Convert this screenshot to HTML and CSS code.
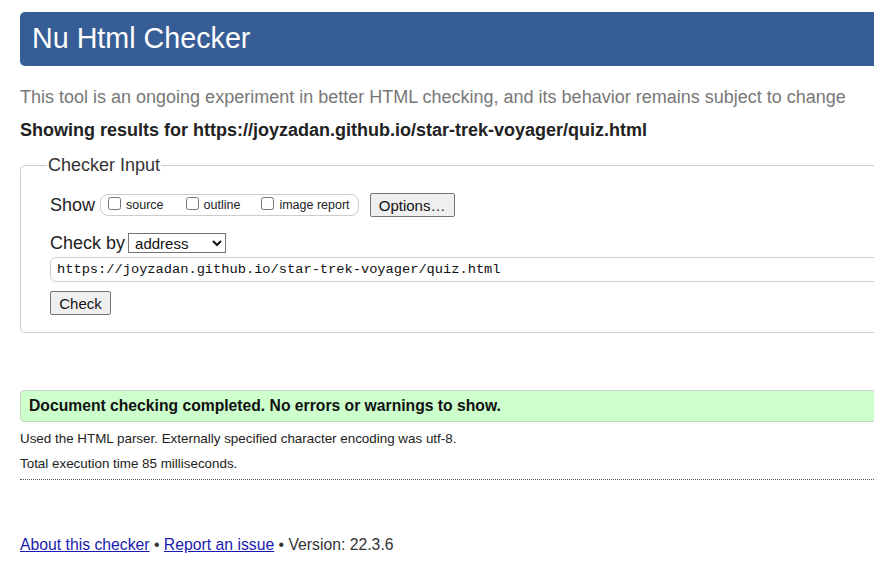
FILE: index.html
```html
<!DOCTYPE html>
<html lang="en">
<head>
<meta charset="utf-8">
<title>Showing results for https://joyzadan.github.io/star-trek-voyager/quiz.html - Nu Html Checker</title>
<link rel="stylesheet" href="styles.css">
</head>
<body>
<div class="page">
  <h1 class="title">Nu Html Checker</h1>
  <p class="intro">This tool is an ongoing experiment in better HTML checking, and its behavior remains subject to change</p>
  <p class="results-for">Showing results for https://joyzadan.github.io/star-trek-voyager/quiz.html</p>
  <form class="checker">
    <fieldset class="checker-set">
      <legend class="checker-legend">Checker Input</legend>
      <div class="row show-row">
        <span class="row-label">Show</span>
        <span class="show-opts">
          <label class="opt opt-source"><input type="checkbox" class="cb">source</label>
          <label class="opt opt-outline"><input type="checkbox" class="cb">outline</label>
          <label class="opt opt-image"><input type="checkbox" class="cb">image report</label>
        </span>
        <button type="button" class="btn btn-options">Options…</button>
      </div>
      <div class="row by-row">
        <span class="row-label">Check by</span>
        <select class="by-select"><option>address</option></select>
      </div>
      <input class="url-input" type="text" value="https://joyzadan.github.io/star-trek-voyager/quiz.html">
      <div class="row submit-row">
        <button type="button" class="btn btn-check">Check</button>
      </div>
    </fieldset>
  </form>
  <p class="success">Document checking completed. No errors or warnings to show.</p>
  <p class="detail">Used the HTML parser. Externally specified character encoding was utf-8.</p>
  <p class="detail">Total execution time 85 milliseconds.</p>
  <hr class="dots">
  <p class="footer"><a href="#" class="flink">About this checker</a> • <a href="#" class="flink">Report an issue</a> • Version: 22.3.6</p>
</div>
</body>
</html>
```
FILE: styles.css
```css
html {
  overflow: hidden;
}
body {
  margin: 0;
  padding: 12px 0 0 20px;
  font-family: "Liberation Sans", Arial, sans-serif;
  color: #222;
  background: #fff;
}
.page {
  width: 900px;
}
.title {
  margin: 0;
  height: 54px;
  box-sizing: border-box;
  padding: 9px 0 0 12px;
  background: #365d95;
  color: #fff;
  font-size: 28.7px;
  font-weight: normal;
  line-height: 34px;
  border-radius: 5px 0 0 5px;
}
.intro {
  margin: 20px 0 0;
  font-size: 18px;
  line-height: 22px;
  color: #777;
}
.results-for {
  margin: 11px 0 0;
  font-size: 18px;
  line-height: 23px;
  font-weight: bold;
  color: #222;
}
.checker {
  margin: 12px 0 0;
}
.checker-set {
  margin: 0;
  padding: 6px 0 17px 29px;
  border: 1px solid #ccc;
  border-radius: 5px;
}
.checker-legend {
  margin-left: -3px;
  padding: 0 1px;
  font-size: 18px;
  color: #333;
  line-height: 22px;
}
.row {
  display: flex;
  align-items: center;
}
.row-label {
  font-size: 18px;
  color: #222;
  line-height: 22px;
}
.show-row {
  margin-top: 11px;
}
.show-opts {
  display: flex;
  align-items: center;
  margin-left: 5px;
  height: 20px;
  border: 1px solid #ccc;
  border-radius: 8px;
  padding: 0 8px 0 7px;
}
.opt {
  display: flex;
  align-items: center;
  font-size: 12.5px;
  color: #222;
}
.opt .cb {
  margin: 0 5px 3px 0;
  width: 13px;
  height: 13px;
}
.opt-outline {
  margin-left: 22px;
}
.opt-image {
  margin-left: 21px;
}
.btn {
  font-family: "Liberation Sans", Arial, sans-serif;
  font-size: 15px;
  color: #111;
  background: #efefef;
  border: 1px solid #767676;
  border-radius: 2px;
  padding: 1px 8px;
  height: 24px;
}
.btn-options {
  margin-left: 11px;
  width: 85px;
}
.by-row {
  margin-top: 15px;
}
.by-select {
  margin-left: 3px;
  font-family: "Liberation Sans", Arial, sans-serif;
  font-size: 15px;
  height: 20px;
  width: 98px;
  border: 1px solid #767676;
  border-radius: 0;
  background: #fff;
  color: #111;
  padding: 0 0 0 2px;
}
.url-input {
  display: block;
  box-sizing: border-box;
  margin: 3px 0 0;
  width: 860px;
  height: 25px;
  padding: 0 6px;
  font-family: "Liberation Mono", "DejaVu Sans Mono", monospace;
  font-size: 13.7px;
  color: #111;
  border: 1px solid #ccc;
  border-radius: 6px;
}
.submit-row {
  margin-top: 9px;
}
.btn-check {
  width: 61px;
}
.success {
  margin: 57px 0 0;
  height: 32px;
  box-sizing: border-box;
  padding: 0 0 0 8px;
  background: #ccffcc;
  border: 1px solid #c2d4c2;
  border-radius: 4px 0 0 4px;
  font-size: 15.7px;
  font-weight: bold;
  line-height: 30px;
  color: #111;
}
.detail {
  margin: 8px 0 0;
  font-size: 13.4px;
  line-height: 17px;
  color: #222;
}
.detail + .detail {
  margin-top: 8px;
}
.dots {
  margin: 7px 0 0;
  border: 0;
  border-top: 1px dotted #555;
  height: 0;
}
.footer {
  margin: 55px 0 0;
  font-size: 15.75px;
  line-height: 20px;
  color: #333;
}
.flink {
  color: #1a1ab0;
}
```
